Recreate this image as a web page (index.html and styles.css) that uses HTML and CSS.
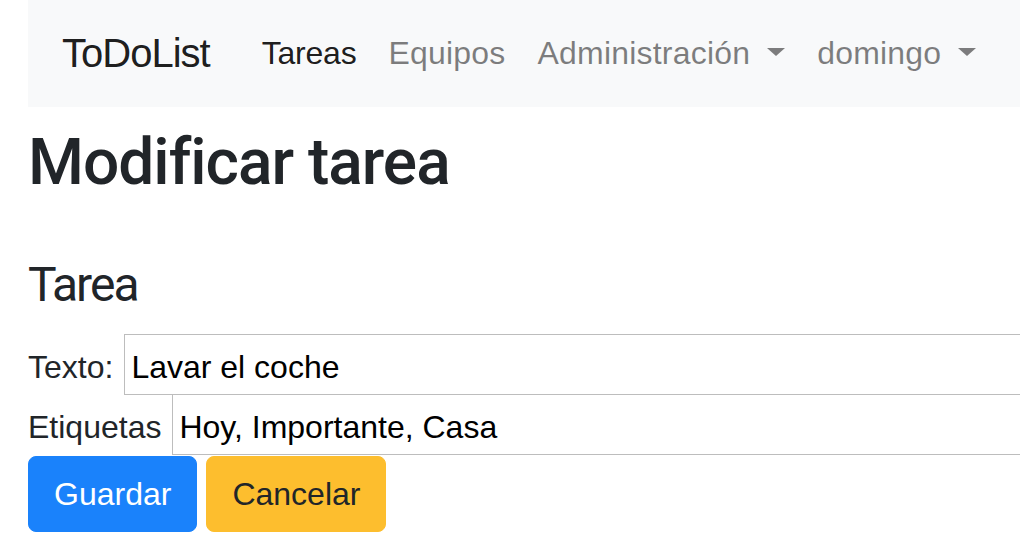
FILE: index.html
```html
<!DOCTYPE html>
<html lang="es">
<head>
<meta charset="utf-8">
<title>ToDoList - Modificar tarea</title>
<link rel="stylesheet" href="styles.css">
</head>
<body>
<div class="page">
  <nav class="navbar">
    <a class="brand" href="#">ToDoList</a>
    <ul class="nav">
      <li><a class="nav-link active" href="#">Tareas</a></li>
      <li><a class="nav-link" href="#">Equipos</a></li>
      <li><a class="nav-link dropdown" href="#">Administración</a></li>
      <li><a class="nav-link dropdown" href="#">domingo</a></li>
    </ul>
  </nav>
  <h1 class="title">Modificar tarea</h1>
  <h2 class="subtitle">Tarea</h2>
  <form class="form">
    <div class="field">
      <label class="label" for="texto">Texto:</label>
      <input class="input" id="texto" type="text" value="Lavar el coche">
    </div>
    <div class="field">
      <label class="label" for="etiquetas">Etiquetas</label>
      <input class="input" id="etiquetas" type="text" value="Hoy, Importante, Casa">
    </div>
    <div class="actions">
      <button class="btn btn-primary" type="submit">Guardar</button>
      <button class="btn btn-warning" type="button">Cancelar</button>
    </div>
  </form>
</div>
</body>
</html>
```

FILE: styles.css
```css
html, body {
  margin: 0;
  padding: 0;
  overflow: hidden;
  background: #fff;
}
body {
  font-family: "Liberation Sans", Arial, sans-serif;
  color: #212529;
}
.page {
  padding-left: 28px;
  width: 1200px;
}
.navbar {
  display: flex;
  align-items: center;
  height: 107px;
  padding: 0 32px;
  background: #f8f9fa;
}
.brand {
  font-size: 40px;
  letter-spacing: -1px;
  color: rgba(0, 0, 0, 0.9);
  text-decoration: none;
  margin-right: 36px;
  margin-left: 2px;
}
.nav {
  display: flex;
  list-style: none;
  margin: 0;
  padding: 0;
}
.nav-link {
  display: block;
  padding: 0 16px;
  font-size: 32px;
  letter-spacing: 0.2px;
  color: rgba(0, 0, 0, 0.5);
  text-decoration: none;
}
.nav-link.active {
  color: rgba(0, 0, 0, 0.9);
  letter-spacing: -0.2px;
}
.dropdown::after {
  content: "";
  display: inline-block;
  margin-left: 17px;
  vertical-align: 8px;
  border-top: 8px solid rgba(0, 0, 0, 0.5);
  border-left: 9px solid transparent;
  border-right: 9px solid transparent;
}
.title {
  margin: 18px 0 0 0;
  font-family: Roboto, "Liberation Sans", sans-serif;
  font-size: 64px;
  font-weight: 500;
  line-height: 1.2;
  letter-spacing: -1px;
}
.subtitle {
  margin: 54px 0 0 0;
  font-family: Roboto, "Liberation Sans", sans-serif;
  font-size: 48px;
  font-weight: 400;
  line-height: 1.2;
  letter-spacing: -2px;
}
.form {
  margin-top: 21px;
}
.field {
  display: flex;
  align-items: baseline;
}
.label {
  font-size: 32px;
  margin-right: 11px;
}
.input {
  box-sizing: border-box;
  width: 1000px;
  height: 61px;
  padding: 5px 6px 0 6px;
  border: 1px solid #bdbdbd;
  margin: 0 0 -1px 0;
  font-family: "Liberation Sans", Arial, sans-serif;
  font-size: 32px;
  color: #000;
  background: #fff;
  outline: none;
}
.actions {
  display: flex;
  gap: 9px;
  margin-top: 2px;
}
.btn {
  font-family: "Liberation Sans", Arial, sans-serif;
  font-size: 32px;
  line-height: 50px;
  padding: 12px 25px;
  border: 1px solid transparent;
  border-radius: 8px;
}
.btn-primary {
  background: #1a82fb;
  border-color: #1a82fb;
  color: #fff;
}
.btn-warning {
  background: #fdbe2e;
  border-color: #fdbe2e;
  color: #212529;
}
```
